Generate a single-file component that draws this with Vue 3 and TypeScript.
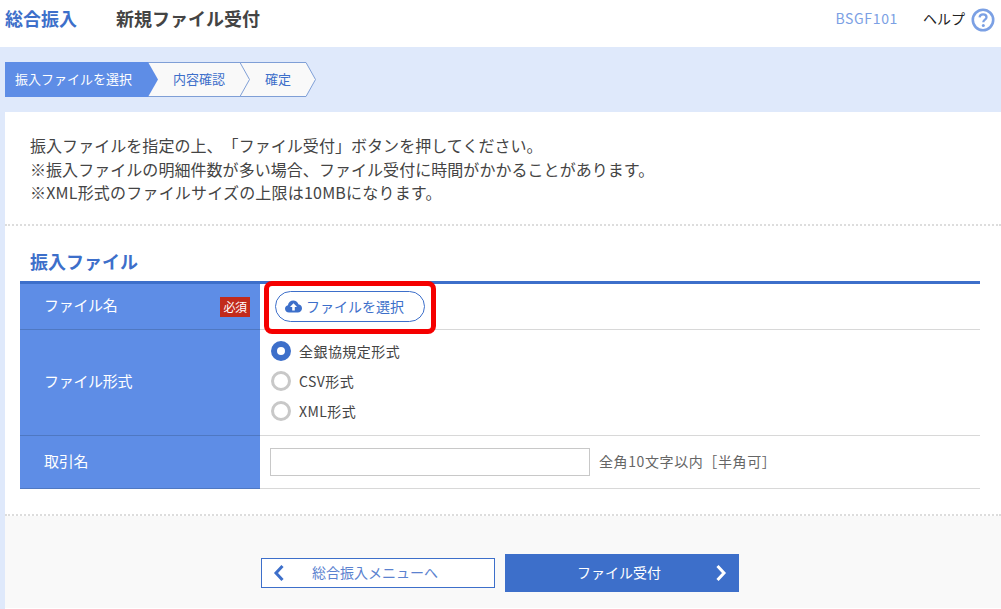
<script setup lang="ts">
const steps: string[] = ['内容確認', '確定']
</script>

<template>
  <div class="page">
    <header class="top">
      <div class="crumb">総合振入</div>
      <h1 class="title">新規ファイル受付</h1>
      <div class="code">BSGF101</div>
      <div class="help">ヘルプ</div>
      <svg class="help-icon" width="24" height="24" viewBox="0 0 24 24">
        <circle cx="12" cy="12" r="10.2" fill="#fff" stroke="#7ba0e4" stroke-width="2.6" />
        <path d="M8.6 9.4c.2-2 1.6-3 3.5-3 2 0 3.4 1.1 3.4 2.8 0 2.5-3.2 2.4-3.2 5" fill="none" stroke="#7ba0e4" stroke-width="2.3" />
        <circle cx="12.3" cy="17.4" r="1.5" fill="#7ba0e4" />
      </svg>
    </header>

    <div class="band">
      <div class="steps">
        <div class="step-active">振入ファイルを選択</div>
        <svg class="tip" width="11" height="35" viewBox="0 0 11 35">
          <path d="M0 0L10 17.5L0 35Z" fill="#5e8de6" />
        </svg>
        <div class="step step-one">{{ steps[0] }}</div>
        <svg class="tip" width="11" height="35" viewBox="0 0 11 35">
          <path d="M0 .5L9.5 17.5L0 34.5" fill="#f9f9f9" stroke="#7f9fd6" />
        </svg>
        <div class="step step-two">{{ steps[1] }}</div>
        <svg class="tip" width="11" height="35" viewBox="0 0 11 35">
          <path d="M0 .5L9.5 17.5L0 34.5" fill="#f9f9f9" stroke="#7f9fd6" />
        </svg>
      </div>
    </div>

    <main class="card">
      <section class="intro">
        <p>振入ファイルを指定の上、「ファイル受付」ボタンを押してください。</p>
        <p>※振入ファイルの明細件数が多い場合、ファイル受付に時間がかかることがあります。</p>
        <p class="intro-last">※XML形式のファイルサイズの上限は10MBになります。</p>
      </section>

      <section class="form">
        <h2 class="heading">振入ファイル</h2>
        <div class="table">
          <div class="row row-file">
            <div class="label label-split">
              <span>ファイル名</span>
              <span class="req">必須</span>
            </div>
            <div class="value">
              <button class="file-btn" type="button">
                <svg width="17" height="13" viewBox="0 0 17 13">
                  <path d="M4 12.5C1.8 12.5 0 11 0 8.8 0 7 1.2 5.6 2.9 5.2 3.4 2.3 5.6.5 8.3.5c2.4 0 4.4 1.4 5.1 3.7 2 .2 3.6 1.9 3.6 4 0 2.4-1.9 4.3-4.2 4.3Z" fill="#3d6fca" />
                  <path d="M8.5 3.2L12 7H9.8v3.4H7.2V7H5Z" fill="#fff" />
                </svg>
                <span>ファイルを選択</span>
              </button>
              <div class="callout"></div>
            </div>
          </div>
          <div class="row row-format">
            <div class="label">ファイル形式</div>
            <div class="value radios">
              <label class="radio"><span class="dot dot-on"></span>全銀協規定形式</label>
              <label class="radio"><span class="dot"></span>CSV形式</label>
              <label class="radio"><span class="dot"></span>XML形式</label>
            </div>
          </div>
          <div class="row row-name">
            <div class="label">取引名</div>
            <div class="value name-value">
              <input class="name-input" type="text" />
              <span class="hint">全角10文字以内［半角可］</span>
            </div>
          </div>
        </div>
      </section>

      <footer class="actions">
        <button class="back" type="button">
          <svg width="12" height="18" viewBox="0 0 12 18">
            <path d="M9.5 2L3 9l6.5 7" fill="none" stroke="#3d6fca" stroke-width="3" />
          </svg>
          <span>総合振入メニューへ</span>
        </button>
        <button class="next" type="button">
          <span>ファイル受付</span>
          <svg width="12" height="18" viewBox="0 0 12 18">
            <path d="M2.5 2L9 9l-6.5 7" fill="none" stroke="#fff" stroke-width="3" />
          </svg>
        </button>
      </footer>
    </main>
  </div>
</template>

<style scoped>
.page {
  width: 1001px;
  height: 609px;
  overflow: hidden;
  background: #dfe9fb;
  font-family: "Noto Sans CJK JP", "Noto Sans", sans-serif;
  color: #444;
  text-spacing-trim: space-all;
}
.top {
  height: 47px;
  background: #fff;
  display: flex;
  align-items: flex-start;
  padding-left: 5px;
  box-sizing: border-box;
}
.crumb {
  width: 111px;
  margin-top: 6px;
  font-size: 18px;
  line-height: 24px;
  font-weight: 700;
  color: #3d6fca;
}
.title {
  margin: 6px 0 0;
  font-size: 18px;
  line-height: 24px;
  font-weight: 700;
  color: #444;
}
.code {
  margin: 8px 0 0 auto;
  font-size: 14px;
  line-height: 20px;
  letter-spacing: 0.65px;
  color: #7ba0e4;
}
.help {
  margin: 8px 0 0 25px;
  font-size: 14px;
  line-height: 20px;
  color: #222;
}
.help-icon {
  margin: 8px 6px 0 6px;
}
.band {
  height: 65px;
  padding: 15px 0 0 5px;
  box-sizing: border-box;
}
.steps {
  display: flex;
  height: 35px;
  font-size: 13px;
}
.step-active {
  width: 143px;
  padding-left: 10px;
  box-sizing: border-box;
  background: #5e8de6;
  color: #fff;
  line-height: 33px;
}
.tip {
  display: block;
  flex: none;
  position: relative;
  z-index: 1;
  margin-right: -11px;
}
.step {
  box-sizing: border-box;
  height: 35px;
  line-height: 31px;
  background: #f9f9f9;
  border-top: 1px solid #7f9fd6;
  border-bottom: 1px solid #7f9fd6;
  color: #3d6fca;
}
.step-one {
  width: 92px;
  padding-left: 25px;
}
.step-two {
  width: 66px;
  padding-left: 25px;
}
.card {
  margin-left: 5px;
  height: 497px;
  background: #fff;
}
.intro {
  height: 114px;
  padding: 22px 0 0 25px;
  box-sizing: border-box;
  border-bottom: 2px dotted #ddd;
  font-size: 16px;
  line-height: 23.5px;
  letter-spacing: 0.05px;
  color: #444;
}
.intro p {
  margin: 0;
}
.intro .intro-last {
  letter-spacing: 0.2px;
}
.form {
  height: 290px;
  padding: 0 21px 0 15px;
  box-sizing: border-box;
  border-bottom: 2px dotted #ddd;
}
.heading {
  margin: 0;
  padding: 22px 0 0 10px;
  height: 55px;
  box-sizing: border-box;
  font-size: 18px;
  line-height: 26px;
  font-weight: 700;
  color: #3d6fca;
}
.table {
  border-top: 3px solid #3d6fca;
}
.row {
  display: grid;
  grid-template-columns: 240px 1fr;
}
.row-file {
  height: 46px;
}
.row-format {
  height: 106px;
}
.row-name {
  height: 53px;
}
.label {
  background: #5e8de6;
  border-bottom: 1px solid #4f78c2;
  box-sizing: border-box;
  color: #fff;
  font-size: 15px;
  letter-spacing: -0.3px;
  padding: 0 0 4px 24px;
  display: flex;
  align-items: center;
}
.label-split {
  justify-content: space-between;
  padding-right: 10px;
}
.req {
  width: 30px;
  height: 20px;
  margin-top: 4px;
  background: #c22b1c;
  color: #fff;
  font-size: 12px;
  line-height: 19px;
  text-align: center;
  letter-spacing: -0.5px;
}
.value {
  position: relative;
  border-bottom: 1px solid #d8d8d8;
  box-sizing: border-box;
  padding-left: 10px;
}
.file-btn {
  margin: 7px 0 0 5px;
  width: 150px;
  height: 31px;
  box-sizing: border-box;
  border: 1px solid #3d6fca;
  border-radius: 16px;
  background: #fff;
  color: #3d6fca;
  font: inherit;
  font-size: 14px;
  display: flex;
  align-items: center;
  padding: 0 0 1px 9px;
  gap: 4px;
}
.callout {
  position: absolute;
  left: 4px;
  top: -3px;
  width: 172px;
  height: 53px;
  box-sizing: border-box;
  border: 5px solid #f50000;
  border-radius: 8px;
  z-index: 2;
}
.radios {
  display: flex;
  flex-direction: column;
  padding-top: 6px;
}
.radio {
  display: flex;
  align-items: center;
  height: 30px;
  font-size: 14px;
  letter-spacing: 0.45px;
  color: #444;
}
.dot {
  width: 20px;
  height: 20px;
  box-sizing: border-box;
  border: 3px solid #c8c8c8;
  border-radius: 50%;
  background: #fff;
  margin: 0 8px 0 1px;
  flex: none;
}
.dot-on {
  border: 6px solid #3d6fca;
}
.name-value {
  display: flex;
  align-items: center;
}
.name-input {
  width: 320px;
  height: 28px;
  box-sizing: border-box;
  border: 1px solid #c8c8c8;
  background: #fff;
  padding: 0;
}
.hint {
  margin: 0 0 2px 9px;
  font-size: 14px;
  letter-spacing: 0.6px;
  color: #666;
}
.actions {
  height: 92px;
  background: #f9f9f9;
  display: flex;
  align-items: flex-start;
  gap: 10px;
  padding: 38px 0 0 256px;
  box-sizing: border-box;
}
.back,
.next {
  position: relative;
  box-sizing: border-box;
  font: inherit;
  font-size: 14px;
  width: 234px;
  display: flex;
  align-items: center;
}
.back {
  height: 30px;
  margin-top: 4px;
  background: #fff;
  border: 1px solid #3d6fca;
  color: #5b82cf;
  padding: 0 0 0 11px;
}
.back span {
  margin: 0 0 2px 27px;
}
.next {
  height: 38px;
  background: #3d6fca;
  border: 0;
  color: #fff;
  justify-content: space-between;
  padding: 0 12px 0 72px;
}
.next span {
  margin-bottom: 3px;
}
</style>
